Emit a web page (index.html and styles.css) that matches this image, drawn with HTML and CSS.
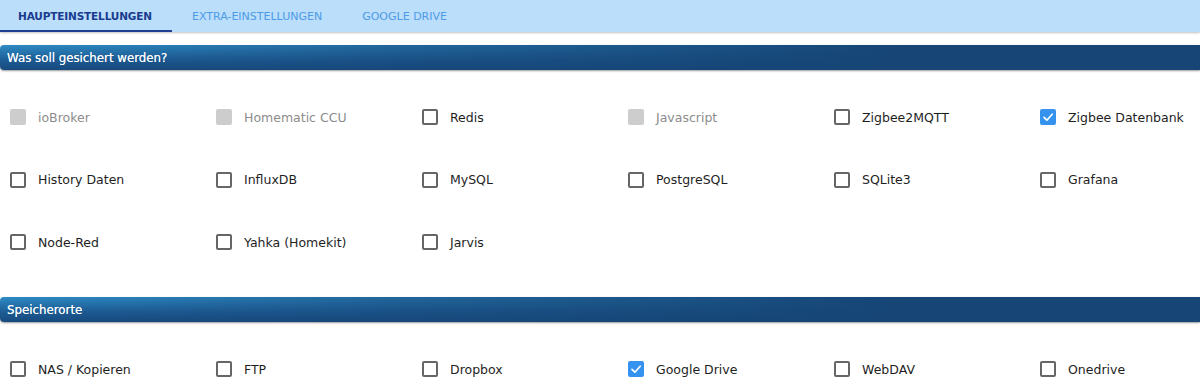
FILE: index.html
```html
<!DOCTYPE html>
<html lang="de">
<head>
    <meta charset="UTF-8">
    <meta name="viewport" content="width=device-width, initial-scale=1.0">
    <title>Backup Einstellungen</title>
    <link rel="stylesheet" href="styles.css">
</head>
<body>
    <div class="tabs">
        <a class="tab active" href="#main">HAUPTEINSTELLUNGEN</a>
        <a class="tab" href="#extra">EXTRA-EINSTELLUNGEN</a>
        <a class="tab" href="#gdrive">GOOGLE DRIVE</a>
    </div>

    <div class="section-title first">Was soll gesichert werden?</div>
    <div class="options">
        <label class="option disabled"><span class="box"></span>ioBroker</label>
        <label class="option disabled"><span class="box"></span>Homematic CCU</label>
        <label class="option"><span class="box"></span>Redis</label>
        <label class="option disabled"><span class="box"></span>Javascript</label>
        <label class="option"><span class="box"></span>Zigbee2MQTT</label>
        <label class="option checked"><span class="box"><svg viewBox="0 0 16 16" width="16" height="16"><path d="M4 8.4 L6.9 11.2 L12.2 5.2" fill="none" stroke="#fff" stroke-width="1.7" stroke-linecap="round" stroke-linejoin="round"/></svg></span>Zigbee Datenbank</label>

        <label class="option"><span class="box"></span>History Daten</label>
        <label class="option"><span class="box"></span>InfluxDB</label>
        <label class="option"><span class="box"></span>MySQL</label>
        <label class="option"><span class="box"></span>PostgreSQL</label>
        <label class="option"><span class="box"></span>SQLite3</label>
        <label class="option"><span class="box"></span>Grafana</label>

        <label class="option"><span class="box"></span>Node-Red</label>
        <label class="option"><span class="box"></span>Yahka (Homekit)</label>
        <label class="option"><span class="box"></span>Jarvis</label>
    </div>

    <div class="section-title">Speicherorte</div>
    <div class="options storage">
        <label class="option"><span class="box"></span>NAS / Kopieren</label>
        <label class="option"><span class="box"></span>FTP</label>
        <label class="option"><span class="box"></span>Dropbox</label>
        <label class="option checked"><span class="box"><svg viewBox="0 0 16 16" width="16" height="16"><path d="M4 8.4 L6.9 11.2 L12.2 5.2" fill="none" stroke="#fff" stroke-width="1.7" stroke-linecap="round" stroke-linejoin="round"/></svg></span>Google Drive</label>
        <label class="option"><span class="box"></span>WebDAV</label>
        <label class="option"><span class="box"></span>Onedrive</label>
    </div>
</body>
</html>
```

FILE: styles.css
```css
body {
    margin: 0;
    background: #fff;
    font-family: "DejaVu Sans", Verdana, sans-serif;
    color: #1e1e1e;
    overflow: hidden;
}
.tabs {
    display: flex;
    height: 32px;
    background: #bbdefb;
    box-shadow: 0 1px 2px rgba(0, 0, 0, 0.25);
}
.tab {
    display: flex;
    align-items: center;
    padding: 2px 20px 0 20px;
    font-size: 11px;
    color: #4d9be6;
    text-decoration: none;
    border-bottom: 2px solid transparent;
    box-sizing: border-box;
    height: 32px;
}
.tab.active {
    padding-left: 18px;
    font-size: 10.5px;
    letter-spacing: -0.15px;
    color: #193c8f;
    font-weight: bold;
    border-bottom-color: #1f3f94;
}
.section-title {
    height: 25px;
    margin-top: 45px;
    padding-left: 7px;
    display: flex;
    align-items: center;
    font-size: 11.8px;
    color: #fff;
    text-shadow: 0 0 0.5px rgba(255, 255, 255, 0.8);
    border-radius: 4px 0 0 4px;
    background:
        linear-gradient(to right, rgba(22, 69, 118, 0) 0%, rgba(22, 69, 118, 0.55) 35%, #164576 75%),
        linear-gradient(to bottom, #2e8cc6 0%, #1d5c95 60%, #174a7e 100%);
    box-shadow: 0 1px 2px rgba(0, 0, 0, 0.4);
}
.section-title.first {
    margin-top: 13px;
}
.options {
    display: grid;
    grid-template-columns: repeat(5, 206px) 1fr;
    row-gap: 42.5px;
    padding: 37px 0 0 10px;
}
.options.storage {
    padding-top: 37px;
}
.option {
    display: flex;
    align-items: center;
    height: 20px;
    font-size: 12.5px;
    white-space: nowrap;
}
.box {
    width: 16px;
    height: 16px;
    box-sizing: border-box;
    border: 2px solid #666;
    border-radius: 2px;
    margin-right: 12px;
    flex-shrink: 0;
}
.option.disabled {
    color: #8c8c8c;
}
.option.disabled .box {
    border: none;
    background: #cdcdcd;
}
.option.checked .box {
    border: none;
    background: #3593ef;
}
.box svg {
    display: block;
}
```
